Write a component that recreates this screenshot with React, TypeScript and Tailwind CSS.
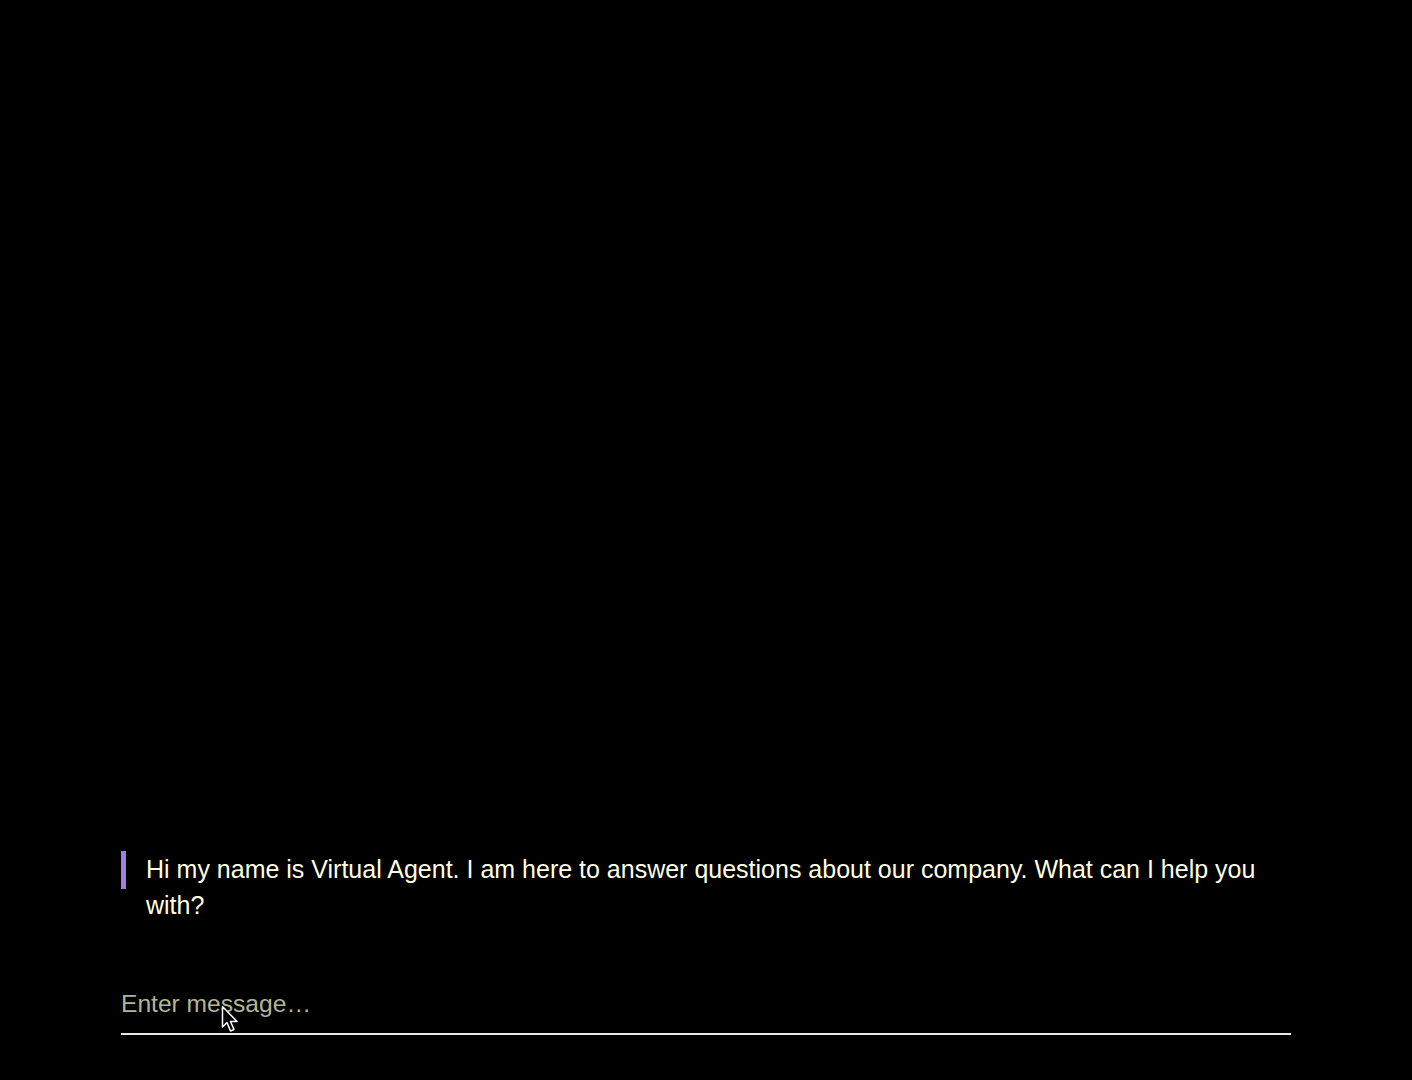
import React from "react";

export default function App() {
  return (
    <div className="min-h-screen h-[1080px] w-full bg-black flex flex-col justify-end relative" style={{ fontFamily: '"Liberation Sans", Arial, Helvetica, sans-serif' }}>
      <div className="mx-auto w-[1170px] pb-[45px]">
        <div className="flex items-start">
          <div className="w-[5px] h-[38px] bg-[#a27fdc] shrink-0" />
          <p className="pl-[20px] text-[25px] leading-[36px] text-[#ffffe0] pr-[20px]">
            Hi my name is Virtual Agent. I am here to answer questions about our company. What can I help you with?
          </p>
        </div>
        <div className="mt-[63px] border-b-2 border-[#e8e8e8]">
          <input
            className="w-full bg-transparent text-[24.6px] leading-[36px] h-[36px] mb-[11px] outline-none text-[#ffffe0] placeholder:text-[#b4b496]"
            placeholder="Enter message…"
          />
        </div>
      </div>
      <svg className="absolute left-[221px] top-[1005px]" width="20" height="30" viewBox="0 0 20 30">
        <path d="M1.5 1.5 L1.5 22 L6 17.5 L9.5 26 L13 24.5 L9.5 16.5 L16 16.5 Z" fill="#000" stroke="#fff" strokeWidth="1.5" strokeLinejoin="round" />
      </svg>
    </div>
  );
}
